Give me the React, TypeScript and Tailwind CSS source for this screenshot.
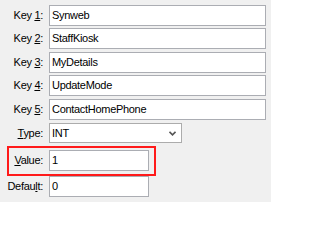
const font = { fontFamily: '"Liberation Sans", Arial, sans-serif' };

type Field = {
    label: React.ReactNode;
    value: string;
};

const keys: Field[] = [
    { label: <>Key <u>1</u>:</>, value: "Synweb" },
    { label: <>Key <u>2</u>:</>, value: "StaffKiosk" },
    { label: <>Key <u>3</u>:</>, value: "MyDetails" },
    { label: <>Key <u>4</u>:</>, value: "UpdateMode" },
    { label: <>Key <u>5</u>:</>, value: "ContactHomePhone" },
];

const Box = ({ value, wide }: { value: string; wide?: boolean }) => (
    <div
        className={`${wide ? "w-[217px]" : "w-[100px]"} h-[21px] flex items-center pl-[2px] bg-white border border-[#abadb3] text-black`}
    >
        {value}
    </div>
);

const Label = ({ children }: { children: React.ReactNode }) => (
    <div className="w-[43px] text-right whitespace-nowrap text-black">{children}</div>
);

export default function App() {
    return (
        <div
            className="relative w-[271px] h-[202px] bg-[#f0f0f0] text-[11px] tracking-[-0.3px] overflow-hidden"
            style={font}
        >
            <div className="flex flex-col pt-[5px]">
                {keys.map((k, i) => (
                    <div
                        key={i}
                        className={`flex items-center gap-[6px] ${i === 0 ? "" : i % 2 ? "mt-[2px]" : "mt-[3px]"}`}
                    >
                        <Label>{k.label}</Label>
                        <Box value={k.value} wide />
                    </div>
                ))}

                <div className="flex items-center gap-[6px] mt-[3px]">
                    <Label>
                        <u>T</u>ype:
                    </Label>
                    <div className="w-[133px] h-[20px] flex items-center justify-between pl-[2px] pr-[5px] bg-white border border-[#acacac]">
                        <span>INT</span>
                        <svg width="7" height="5" viewBox="0 0 7 5">
                            <path d="M0.5 0.8 L3.5 3.8 L6.5 0.8" fill="none" stroke="#555" strokeWidth="1.6" />
                        </svg>
                    </div>
                </div>

                <div className="flex items-center gap-[6px] mt-[7px]">
                    <Label>
                        <u>V</u>alue:
                    </Label>
                    <Box value="1" />
                </div>

                <div className="flex items-center gap-[6px] mt-[5px]">
                    <Label>
                        Defau<u>l</u>t:
                    </Label>
                    <Box value="0" />
                </div>
            </div>

            {/* highlight annotation */}
            <div className="absolute left-[7px] top-[146px] w-[149px] h-[30px] border-2 border-[#ff1a1a] pointer-events-none" />
        </div>
    );
}
